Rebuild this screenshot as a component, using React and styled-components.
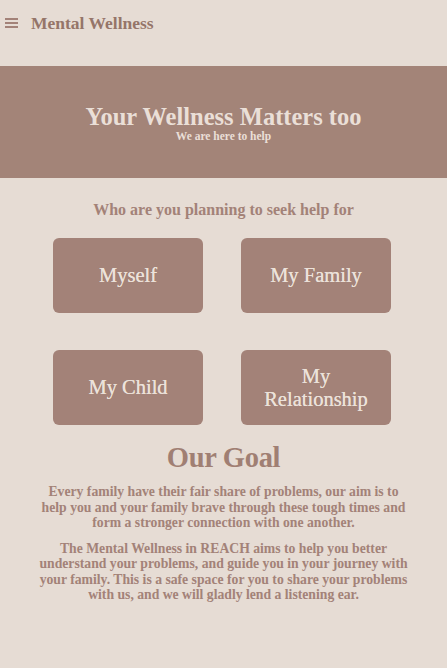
import React from 'react';
import styled, { createGlobalStyle } from 'styled-components';

const GlobalStyle = createGlobalStyle`
  html, body {
    margin: 0;
    padding: 0;
    background: #e6dcd4;
  }
  body {
    font-family: "Liberation Serif", "DejaVu Serif", serif;
    color: #a38278;
  }
`;

const Page = styled.div`
  width: 447px;
  min-height: 668px;
  background: #e6dcd4;
`;

const Header = styled.header`
  height: 66px;
  display: flex;
  align-items: flex-start;
  padding: 13px 0 0 5px;
  box-sizing: border-box;
  gap: 13px;
`;

const Burger = styled.button`
  border: 0;
  background: none;
  padding: 0;
  margin-top: 5px;
  width: 13px;
  height: 10px;
  display: flex;
  flex-direction: column;
  justify-content: space-between;
  & span {
    display: block;
    height: 2px;
    background: #a38278;
  }
`;

const Brand = styled.div`
  font-size: 17.5px;
  font-weight: bold;
  color: #957569;
`;

const Banner = styled.section`
  background: #a38478;
  height: 112px;
  display: flex;
  flex-direction: column;
  align-items: center;
  justify-content: center;
  color: #eadfd7;
  padding-top: 2px;
  box-sizing: border-box;
`;

const BannerTitle = styled.h1`
  margin: 0;
  font-size: 24.5px;
  font-weight: bold;
  line-height: 26px;
`;

const BannerSub = styled.div`
  font-size: 11.5px;
  font-weight: bold;
  line-height: 13px;
`;

const Question = styled.h2`
  margin: 22px 0 0;
  text-align: center;
  font-size: 16px;
  font-weight: bold;
  line-height: 20px;
  color: #a38278;
`;

const Grid = styled.div`
  display: grid;
  grid-template-columns: 150px 150px;
  column-gap: 38px;
  row-gap: 37px;
  justify-content: center;
  margin-top: 18px;
  padding-right: 3px;
`;

const Choice = styled.button`
  height: 75px;
  border: 0;
  border-radius: 6px;
  background: #a38278;
  color: #ece2da;
  font-family: "Liberation Serif", "DejaVu Serif", serif;
  font-size: 20.5px;
  line-height: 23px;
  padding: 0 20px;
  display: flex;
  align-items: center;
  justify-content: center;
  text-align: center;
  text-shadow: 0 0 0.4px #ece2da;
`;

const Goal = styled.section`
  text-align: center;
  padding: 0 36px;
`;

const GoalTitle = styled.h2`
  margin: 16px 0 0;
  font-size: 28.5px;
  font-weight: bold;
  letter-spacing: -0.3px;
  line-height: 34px;
  color: #a07f73;
`;

const Para = styled.p`
  margin: ${p => (p.first ? '9px' : '10px')} 0 0;
  font-size: 13.7px;
  font-weight: bold;
  line-height: 15.5px;
  color: #a38278;
`;

const choices = ['Myself', 'My Family', 'My Child', 'My Relationship'];

export default function App() {
  return (
    <Page>
      <GlobalStyle />
      <Header>
        <Burger aria-label="menu">
          <span />
          <span />
          <span />
        </Burger>
        <Brand>Mental Wellness</Brand>
      </Header>
      <Banner>
        <BannerTitle>Your Wellness Matters too</BannerTitle>
        <BannerSub>We are here to help</BannerSub>
      </Banner>
      <Question>Who are you planning to seek help for</Question>
      <Grid>
        {choices.map(c => (
          <Choice key={c}>{c}</Choice>
        ))}
      </Grid>
      <Goal>
        <GoalTitle>Our Goal</GoalTitle>
        <Para first>
          Every family have their fair share of problems, our aim is to help you and your
          family brave through these tough times and form a stronger connection with one
          another.
        </Para>
        <Para>
          The Mental Wellness in REACH aims to help you better understand your problems,
          and guide you in your journey with your family. This is a safe space for you to
          share your problems with us, and we will gladly lend a listening ear.
        </Para>
      </Goal>
    </Page>
  );
}
